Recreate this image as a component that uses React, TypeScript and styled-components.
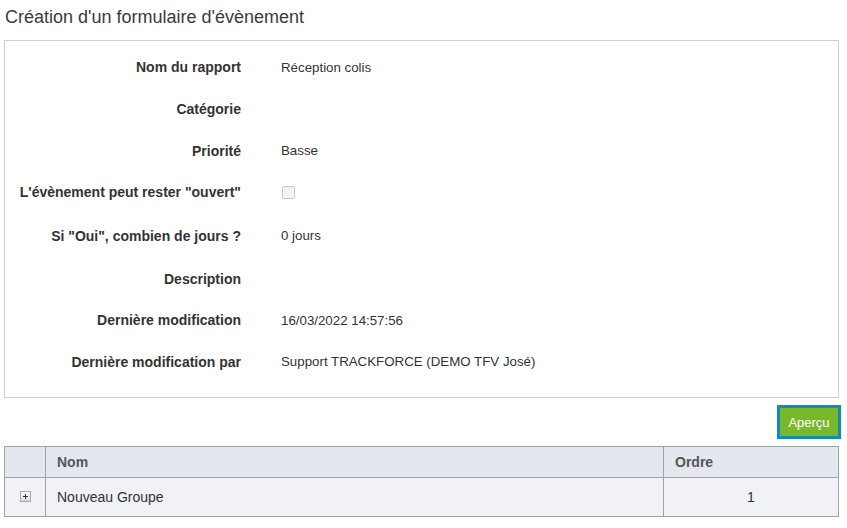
import React from "react";
import styled, { createGlobalStyle } from "styled-components";

const Global = createGlobalStyle`
  html, body { margin: 0; padding: 0; background: #fff; }
  body { font-family: "Liberation Sans", Arial, sans-serif; color: #333; }
`;

const Page = styled.div`
  width: 835px;
  margin-left: 4px;
  padding-top: 5px;
`;

const Title = styled.h1`
  margin: 0 0 0 1px;
  font-size: 18px;
  font-weight: normal;
  color: #3a3a3a;
  line-height: 24px;
  height: 35px;
`;

const Panel = styled.div`
  border: 1px solid #cfcfcf;
  padding: 5px 0 15px 0;
  display: grid;
  grid-template-columns: 236px 1fr;
  grid-template-rows: 42px 42px 41px 42px 45px 41px 42px 41px;
  column-gap: 40px;
  align-items: center;
`;

const Label = styled.div`
  text-align: right;
  font-weight: bold;
  font-size: 14px;
  color: #333;
`;

const Value = styled.div`
  font-size: 13.3px;
  color: #333;
`;

const Check = styled.span`
  display: inline-block;
  width: 11px;
  height: 11px;
  border: 1px solid #c8c8c8;
  border-radius: 2px;
  background: #f4f4f4;
  vertical-align: middle;
  margin-left: 1px;
`;

const Actions = styled.div`
  display: flex;
  justify-content: flex-end;
  padding: 10px 1px 10px 0;
`;

const Button = styled.button`
  font-family: "Liberation Sans", Arial, sans-serif;
  font-size: 13px;
  color: #fff;
  background: #78b82a;
  border: none;
  width: 58px;
  height: 28px;
  padding: 0;
  outline: 3px solid #118db3;
  cursor: pointer;
`;

const Table = styled.table`
  width: 100%;
  border-collapse: collapse;
  border: 1px solid #9da3ad;
`;

const Th = styled.th<{ $w?: number }>`
  background: #e4e7ed;
  border: 1px solid #9da3ad;
  height: 30px;
  text-align: left;
  padding: 0 0 0 11px;
  font-size: 14px;
  font-weight: bold;
  color: #555;
  ${(p) => (p.$w ? `width: ${p.$w}px;` : "")}
`;

const Td = styled.td<{ $center?: boolean }>`
  background: #f0f2f6;
  border: 1px solid #9da3ad;
  height: 38px;
  padding: 0 0 0 ${(p) => (p.$center ? "0" : "11px")};
  font-size: 14px;
  color: #333;
  text-align: ${(p) => (p.$center ? "center" : "left")};
`;

const IconTd = styled.td`
  background: #f0f2f6;
  border: 1px solid #9da3ad;
  height: 38px;
  padding: 0 0 0 15px;
  vertical-align: middle;
`;

const Expander = styled.span`
  display: block;
  width: 9px;
  height: 9px;
  border: 1px solid #a9a9a9;
  background: linear-gradient(#ffffff, #dcdcdc);
  margin-top: -2px;
  position: relative;
  &::before, &::after {
    content: "";
    position: absolute;
    background: #333;
  }
  &::before { left: 2px; top: 4px; width: 5px; height: 1px; }
  &::after { left: 4px; top: 2px; width: 1px; height: 5px; }
`;

const rows: [string, React.ReactNode][] = [
  ["Nom du rapport", "Réception colis"],
  ["Catégorie", ""],
  ["Priorité", "Basse"],
  ["L'évènement peut rester \"ouvert\"", <Check key="c" />],
  ["Si \"Oui\", combien de jours ?", "0 jours"],
  ["Description", ""],
  ["Dernière modification", "16/03/2022 14:57:56"],
  ["Dernière modification par", "Support TRACKFORCE (DEMO TFV José)"],
];

export default function App() {
  return (
    <Page>
      <Global />
      <Title>Création d'un formulaire d'évènement</Title>
      <Panel>
        {rows.map(([l, v]) => (
          <React.Fragment key={l}>
            <Label>{l}</Label>
            <Value>{v}</Value>
          </React.Fragment>
        ))}
      </Panel>
      <Actions>
        <Button>Aperçu</Button>
      </Actions>
      <Table>
        <thead>
          <tr>
            <Th $w={29} />
            <Th>Nom</Th>
            <Th $w={163}>Ordre</Th>
          </tr>
        </thead>
        <tbody>
          <tr>
            <IconTd>
              <Expander />
            </IconTd>
            <Td>Nouveau Groupe</Td>
            <Td $center>1</Td>
          </tr>
        </tbody>
      </Table>
    </Page>
  );
}
